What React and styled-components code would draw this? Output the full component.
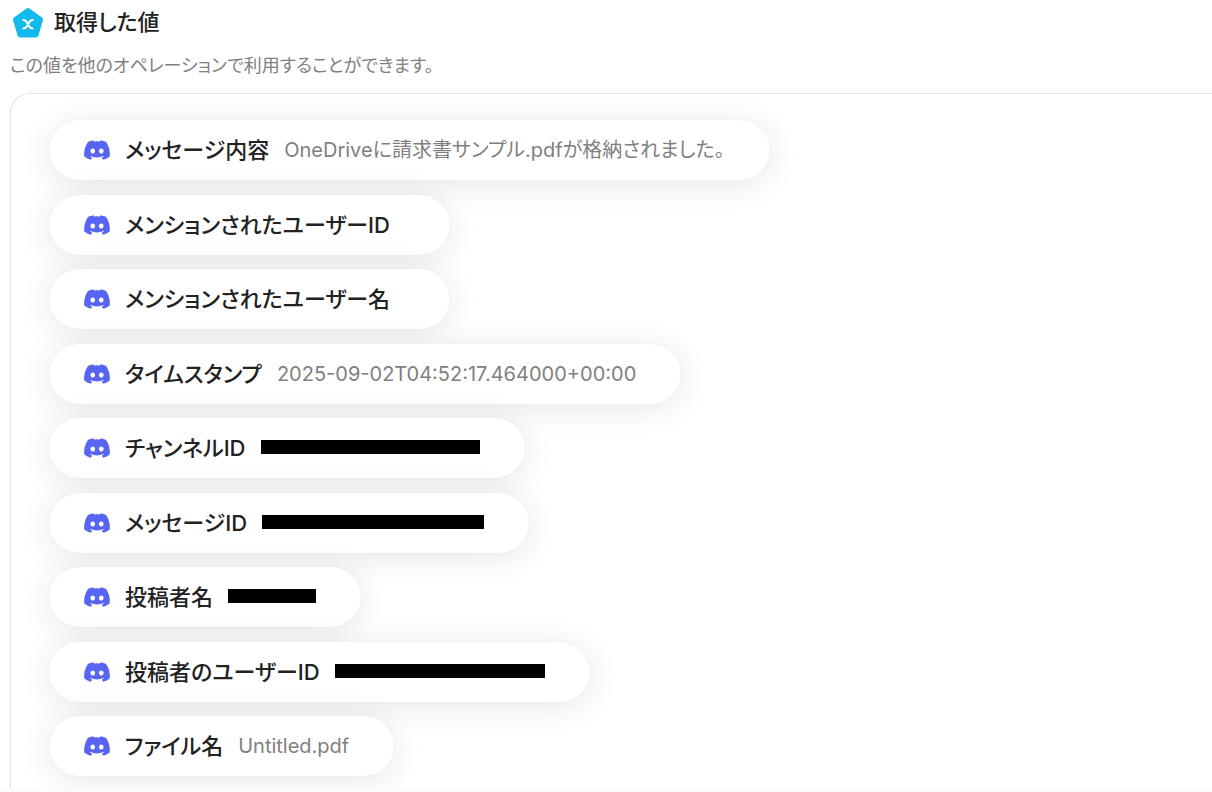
import React from "react";
import styled, { createGlobalStyle } from "styled-components";
import { FaDiscord } from "react-icons/fa";

const GlobalStyle = createGlobalStyle`
  * {
    box-sizing: border-box;
  }

  body {
    margin: 0;
    background: #fff;
    color: #222;
    font-family: Inter, "Noto Sans CJK JP", sans-serif;
    font-feature-settings: "palt";
  }
`;

const Page = styled.main`
  display: flex;
  flex-direction: column;
  height: 100vh;
  padding-top: 4px;
  border-bottom: 3px solid #fbfbfb;
  overflow: hidden;
`;

const Header = styled.header`
  display: flex;
  flex: none;
  align-items: center;
  gap: 10px;
  height: 36px;
  padding-left: 12px;
`;

const Title = styled.h1`
  margin: 0;
  font-size: 22px;
  font-weight: 500;
  line-height: 36px;
`;

const Description = styled.p`
  margin: 13px 0 15px 10px;
  color: #808080;
  font-size: 18px;
  line-height: 25px;
`;

const Panel = styled.section`
  flex: 1;
  min-height: 0;
  margin-left: 10px;
  padding: 26px 38px;
  border: 1px solid #e3e3e3;
  border-width: 1px 0 0 1px;
  border-top-left-radius: 20px;
  overflow: hidden;
`;

const ValueList = styled.ul`
  display: flex;
  flex-direction: column;
  align-items: flex-start;
  margin: 0;
  padding: 0;
  list-style: none;
`;

const ValueItem = styled.li`
  display: flex;
  align-items: center;
  height: 60px;
  margin-bottom: 14px;
  padding: 0 45px 0 34px;
  border-radius: 30px;
  background: #fff;
  box-shadow:
    0 0 1px rgba(0, 0, 0, 0.1),
    0 4px 32px rgba(0, 0, 0, 0.1);
  white-space: nowrap;

  &:nth-child(odd) {
    margin-bottom: 15px;
  }
`;

const DiscordIcon = styled(FaDiscord)`
  flex: none;
  width: 28px;
  height: 28px;
  margin-right: 14px;
  color: #5865f2;
`;

const Label = styled.span`
  margin-right: 15px;
  font-size: 22px;
  font-weight: 500;
  line-height: 32px;
`;

const Value = styled.span`
  color: #808080;
  font-size: 20px;
  line-height: 32px;
`;

const Redacted = styled.span`
  width: ${(props) => props.$width}px;
  height: 14px;
  margin-bottom: 2px;
  background: #000;
`;

const values = [
  { label: "メッセージ内容", value: "OneDriveに請求書サンプル.pdfが格納されました。" },
  { label: "メンションされたユーザーID" },
  { label: "メンションされたユーザー名" },
  { label: "タイムスタンプ", value: "2025-09-02T04:52:17.464000+00:00" },
  { label: "チャンネルID", redacted: 219 },
  { label: "メッセージID", redacted: 222 },
  { label: "投稿者名", redacted: 88 },
  { label: "投稿者のユーザーID", redacted: 210 },
  { label: "ファイル名", value: "Untitled.pdf" },
];

function PentagonIcon() {
  return (
    <svg width="32" height="32" viewBox="0 0 32 32" aria-hidden="true">
      <path
        d="M16 4.500 28.500 13.500 24 29H8L3.500 13.500Z"
        fill="#12b9ec"
        stroke="#12b9ec"
        strokeWidth="5"
        strokeLinejoin="round"
      />
      <path
        d="M11.500 14c2 0 2.600.8 3.500 2.500l2 3.500c.9 1.700 1.500 2.500 3.500 2.500M20.500 14c-2 0-2.600.8-3.500 2.500l-2 3.500c-.9 1.700-1.500 2.500-3.500 2.500"
        fill="none"
        stroke="#fff"
        strokeWidth="2.200"
        strokeLinecap="round"
      />
    </svg>
  );
}

export default function App() {
  return (
    <>
      <GlobalStyle />
      <Page>
        <Header>
          <PentagonIcon />
          <Title>取得した値</Title>
        </Header>
        <Description>
          この値を他のオペレーションで利用することができます。
        </Description>
        <Panel>
          <ValueList>
            {values.map((item) => (
              <ValueItem key={item.label}>
                <DiscordIcon />
                <Label>{item.label}</Label>
                {item.value && <Value>{item.value}</Value>}
                {item.redacted && <Redacted $width={item.redacted} />}
              </ValueItem>
            ))}
          </ValueList>
        </Panel>
      </Page>
    </>
  );
}
